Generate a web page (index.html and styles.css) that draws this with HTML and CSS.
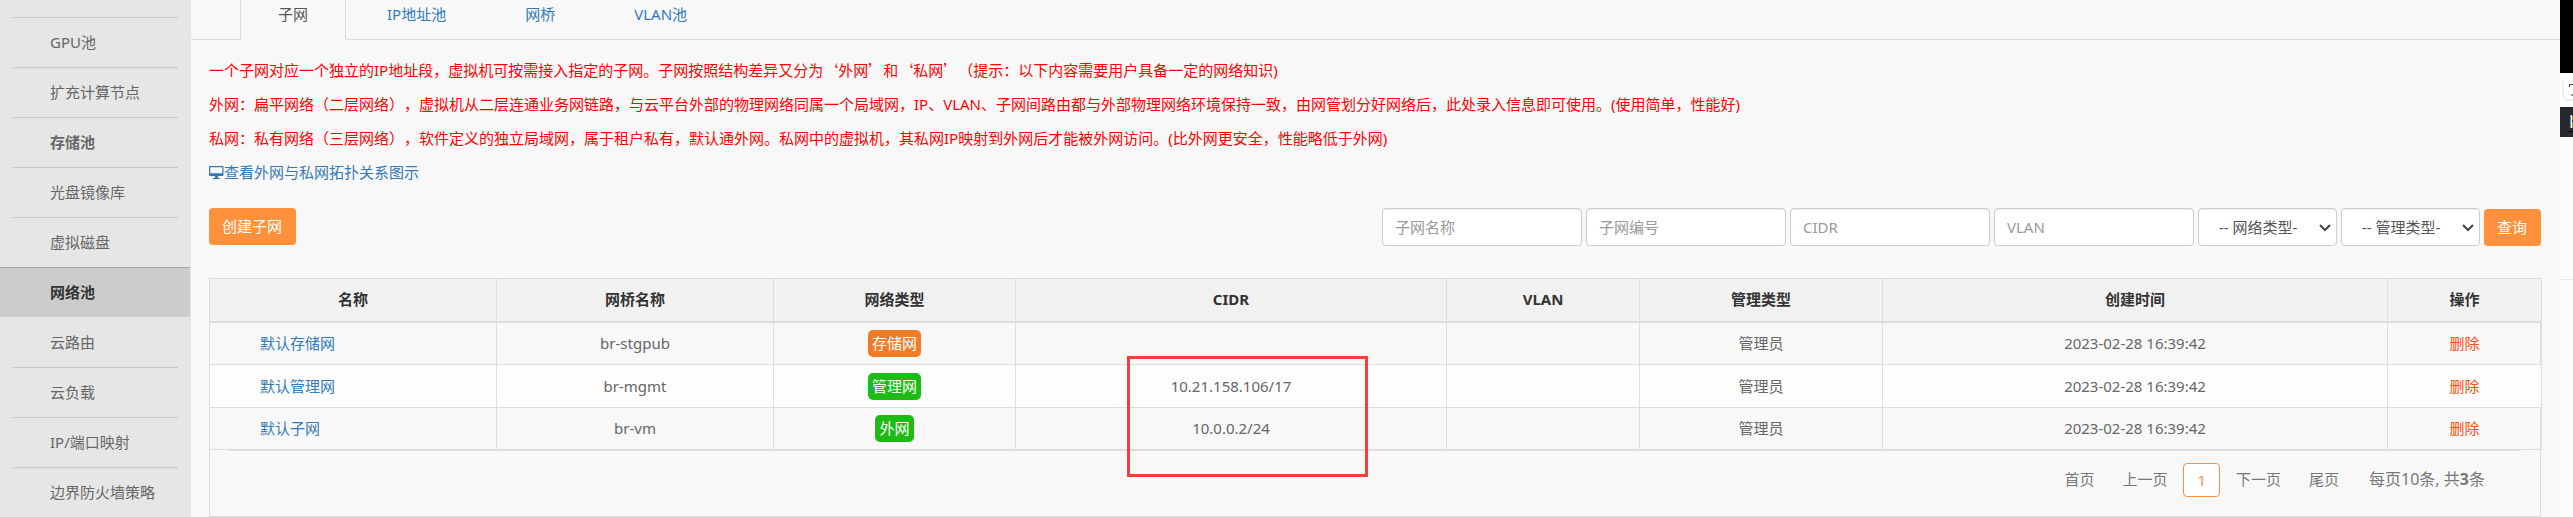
FILE: index.html
```html
<!DOCTYPE html>
<html lang="zh-CN">
<head>
<meta charset="utf-8">
<title>网络池 - 子网</title>
<link rel="stylesheet" href="styles.css">
</head>
<body>
<div class="layout">
  <nav class="sidebar" aria-label="资源池">
    <ul class="side-list">
      <li><a href="#">GPU池</a></li>
      <li><a href="#">扩充计算节点</a></li>
      <li><a href="#" class="strong">存储池</a></li>
      <li><a href="#">光盘镜像库</a></li>
      <li><a href="#">虚拟磁盘</a></li>
      <li class="active"><a href="#" class="strong">网络池</a></li>
      <li class="first"><a href="#">云路由</a></li>
      <li><a href="#">云负载</a></li>
      <li><a href="#">IP/端口映射</a></li>
      <li><a href="#">边界防火墙策略</a></li>
    </ul>
  </nav>

  <main class="main">
    <nav class="tabs" aria-label="网络">
      <a href="#" class="tab current">子网</a>
      <a href="#" class="tab">IP地址池</a>
      <a href="#" class="tab">网桥</a>
      <a href="#" class="tab">VLAN池</a>
    </nav>

    <section class="content">
      <p class="hint">一个子网对应一个独立的IP地址段，虚拟机可按需接入指定的子网。子网按照结构差异又分为<span class="quote">‘</span>外网<span class="quote">’</span>和<span class="quote">‘</span>私网<span class="quote">’</span>（提示：以下内容需要用户具备一定的网络知识)</p>
      <p class="hint">外网：扁平网络（二层网络），虚拟机从二层连通业务网链路，与云平台外部的物理网络同属一个局域网，IP、VLAN、子网间路由都与外部物理网络环境保持一致，由网管划分好网络后，此处录入信息即可使用。(使用简单，性能好)</p>
      <p class="hint">私网：私有网络（三层网络），软件定义的独立局域网，属于租户私有，默认通外网。私网中的虚拟机，其私网IP映射到外网后才能被外网访问。(比外网更安全，性能略低于外网)</p>
      <a href="#" class="topology"><svg class="icon" viewBox="0 0 15 15" aria-hidden="true"><path fill-rule="evenodd" d="M1 1h12.500a1 1 0 0 1 1 1v8a1 1 0 0 1-1 1H9v2h2v1H4v-1h2v-2H1a1 1 0 0 1-1-1V2a1 1 0 0 1 1-1zm.300 1.300v6h12v-6z"/></svg>查看外网与私网拓扑关系图示</a>

      <div class="toolbar">
        <button type="button" class="btn">创建子网</button>
        <form class="search">
          <input type="text" class="field" placeholder="子网名称" aria-label="子网名称">
          <input type="text" class="field" placeholder="子网编号" aria-label="子网编号">
          <input type="text" class="field" placeholder="CIDR" aria-label="CIDR">
          <input type="text" class="field" placeholder="VLAN" aria-label="VLAN">
          <span class="picker"><select aria-label="网络类型"><option>-- 网络类型-</option></select><svg class="caret" viewBox="0 0 12 8" aria-hidden="true"><path d="M1 1l5 5 5-5"/></svg></span>
          <span class="picker"><select aria-label="管理类型"><option>-- 管理类型-</option></select><svg class="caret" viewBox="0 0 12 8" aria-hidden="true"><path d="M1 1l5 5 5-5"/></svg></span>
          <button type="button" class="btn">查询</button>
        </form>
      </div>

      <div class="panel">
        <table class="grid">
          <colgroup>
            <col class="c-name"><col class="c-bridge"><col class="c-type"><col class="c-cidr"><col class="c-vlan"><col class="c-admin"><col class="c-time"><col class="c-action">
          </colgroup>
          <thead>
            <tr><th>名称</th><th>网桥名称</th><th>网络类型</th><th>CIDR</th><th>VLAN</th><th>管理类型</th><th>创建时间</th><th>操作</th></tr>
          </thead>
          <tbody>
            <tr><td class="name"><a href="#">默认存储网</a></td><td>br-stgpub</td><td><span class="tag storage">存储网</span></td><td></td><td></td><td>管理员</td><td>2023-02-28 16:39:42</td><td><a href="#" class="del">删除</a></td></tr>
            <tr><td class="name"><a href="#">默认管理网</a></td><td>br-mgmt</td><td><span class="tag">管理网</span></td><td>10.21.158.106/17</td><td></td><td>管理员</td><td>2023-02-28 16:39:42</td><td><a href="#" class="del">删除</a></td></tr>
            <tr><td class="name"><a href="#">默认子网</a></td><td>br-vm</td><td><span class="tag">外网</span></td><td>10.0.0.2/24</td><td></td><td>管理员</td><td>2023-02-28 16:39:42</td><td><a href="#" class="del">删除</a></td></tr>
          </tbody>
        </table>
        <div class="pager">
          <a href="#">首页</a>
          <a href="#">上一页</a>
          <a href="#" class="page">1</a>
          <a href="#">下一页</a>
          <a href="#">尾页</a>
          <span class="total">每页10条, 共<b>3</b>条</span>
        </div>
        <div class="marker"></div>
      </div>
    </section>
  </main>

  <aside class="edge">
    <div class="edge-black"></div>
    <div class="edge-tool"><svg class="edge-icon" viewBox="0 0 13 34" aria-hidden="true"><path class="shade" d="M3 8v14q1 5 6 5H13"/><path class="ink" d="M13 11.500H9.500V14M11 22h2"/></svg></div>
    <div class="edge-dark"><svg class="edge-icon" viewBox="0 0 13 30" aria-hidden="true"><path fill="#4aa8dc" d="M10 8h1v13h-1z"/><path fill="#fff" d="M11 8h1v13h-1z"/><path fill="#c07a30" d="M12 9h1v4h-1zM12 15h1v6h-1z"/><path fill="#000" d="M9 24h4v1H9z"/></svg></div>
    <div class="edge-rest"></div>
  </aside>
</div>
</body>
</html>
```
FILE: styles.css
```css
* { box-sizing: border-box; }

body {
  margin: 0;
  background: #f8f8f8;
  color: #666;
  font: 15px/21px "Noto Sans", "Noto Sans CJK SC", sans-serif;
  text-spacing-trim: space-all;
}

a { color: #337ab7; text-decoration: none; }

.layout { display: flex; min-height: 100vh; overflow: hidden; }

/* Sidebar */
.sidebar { flex: 0 0 191px; background: #e6e6e6; padding-top: 17px; }
.side-list { list-style: none; margin: 0; padding: 0; }
.side-list li { height: 50px; padding: 0 13px; }
.side-list a {
  display: block;
  height: 50px;
  padding-left: 37px;
  border-top: 1px solid #c8c8c8;
  color: #666;
  line-height: 48px;
}
.side-list .strong { font-weight: bold; }
.side-list .active { padding: 0; margin: 0 1px 0 0; background: #ccc; }
.side-list .active a { padding-left: 50px; border-top-color: #aaa; color: #333; }
.side-list .first a { border-top-color: transparent; }

/* Tabs */
.main { flex: 1; min-width: 0; }
.tabs { display: flex; gap: 3px; height: 40px; padding-left: 49px; border-bottom: 1px solid #ddd; }
.tab { height: 40px; padding: 4px 37px 0; border: 1px solid transparent; border-top: 0; }
.tab.current { border-color: #ddd; border-bottom-color: #f8f8f8; background: #f8f8f8; color: #555; }

/* Content */
.content { padding: 13px 19px 0 18px; }
.hint { margin: 0; color: #f00; line-height: 34px; }
.quote { font-family: "Noto Sans CJK SC", sans-serif; }
.topology { display: flex; align-items: center; height: 34px; }
.icon { width: 15px; height: 15px; fill: #337ab7; }

.toolbar { display: flex; justify-content: space-between; margin: 19px 0 32px; }
.search { display: flex; align-items: center; gap: 4px; }
.btn {
  height: 37px;
  padding: 0 14px 0 13px;
  border: 0;
  border-radius: 4px;
  background: #ff913d;
  color: #fff;
  font: inherit;
}
.field, .picker select {
  height: 38px;
  border: 1px solid #ccc;
  border-radius: 4px;
  background: #fff;
  box-shadow: inset 0 1px 1px rgba(0, 0, 0, .075);
  font: inherit;
  color: #555;
}
.field { width: 200px; padding: 0 12px; }
.field::placeholder { color: #999; opacity: 1; }
.picker { position: relative; }
.picker select { display: block; width: 139px; padding: 0 18px 0 20px; appearance: none; }
.caret {
  position: absolute;
  top: 16px;
  right: 6px;
  width: 12px;
  height: 8px;
  fill: none;
  stroke: #444;
  stroke-width: 2;
  pointer-events: none;
}

/* Table */
.panel { position: relative; border: 1px solid #ddd; border-top: 0; }
.grid { width: calc(100% + 2px); margin: 0 -1px; border-collapse: collapse; table-layout: fixed; }
.grid th, .grid td { border: 1px solid #ddd; padding: 0; text-align: center; }
.grid th { height: 43px; background: #f1f1f1; border-bottom-width: 2px; color: #333; }
.grid td { height: 43px; }
.grid tr:last-child td { height: 42px; }
.grid tbody tr:nth-child(2) { background: #fdfdfd; }
.grid .name { padding-left: 50px; text-align: left; }
.c-name { width: 287px; }
.c-bridge { width: 277px; }
.c-type { width: 242px; }
.c-cidr { width: 431px; }
.c-vlan { width: 193px; }
.c-admin { width: 243px; }
.c-time { width: 505px; }
.c-action { width: 154px; }
.tag {
  display: inline-block;
  padding: 0 4px;
  border-radius: 5px;
  background: #1dbb14;
  color: #fff;
  line-height: 27px;
  vertical-align: middle;
}
.tag.storage { background: #ef7d28; }
.del { color: #ff4f0f; }

/* Pager */
.pager {
  display: flex;
  justify-content: flex-end;
  align-items: center;
  height: 66px;
  margin: 0 19px;
  padding: 0 36px 8px 0;
  border-top: 1px solid #ddd;
}
.pager a { padding: 0 14px; color: #777; }
.pager .page {
  margin: 0 2px;
  padding: 0 13px;
  border: 1px solid #ff913d;
  border-radius: 4px;
  background: #fff;
  color: #ff913d;
  line-height: 32px;
}
.total { padding-left: 16px; color: #777; font-size: 16px; }

.marker {
  position: absolute;
  top: 78px;
  left: 917px;
  width: 241px;
  height: 121px;
  border: 3px solid #ff3a3a;
}

/* Neighbouring window at the right edge */
.edge { display: flex; flex: 0 0 13px; flex-direction: column; }
.edge-black { height: 73px; background: #000; }
.edge-tool { height: 34px; background: #fff; }
.edge-dark { height: 30px; background: #27292e; }
.edge-rest { flex: 1; background: linear-gradient(#e8e8e8, #e8e8e8) 0 142px / 100% 1px no-repeat #fcfcfc; }
.edge-icon { display: block; width: 13px; }
.shade { fill: none; stroke: #eee; stroke-width: 2; }
.ink { fill: none; stroke: #333; stroke-width: 1; }
```
